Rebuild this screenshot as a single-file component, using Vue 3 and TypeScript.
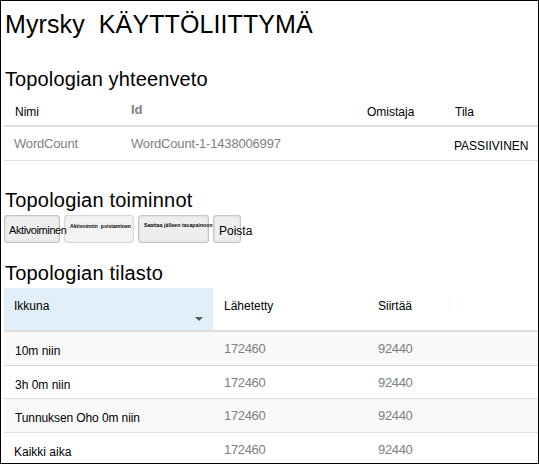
<script setup lang="ts">
interface StatRow {
  window: string
  emitted: string
  transferred: string
  cls: string
}

const stats: StatRow[] = [
  { window: '10m niin', emitted: '172460', transferred: '92440', cls: 'r10m' },
  { window: '3h 0m niin', emitted: '172460', transferred: '92440', cls: 'r3h' },
  { window: 'Tunnuksen Oho 0m niin', emitted: '172460', transferred: '92440', cls: 'r1d' },
  { window: 'Kaikki aika', emitted: '172460', transferred: '92440', cls: 'rall' },
]
</script>

<template>
  <main class="page">
    <h1>Myrsky&nbsp; KÄYTTÖLIITTYMÄ</h1>

    <h2 class="h-summary">Topologian yhteenveto</h2>
    <div class="table summary">
      <div class="row head">
        <span class="name">Nimi</span>
        <span class="id">Id</span>
        <span class="owner">Omistaja</span>
        <span class="status">Tila</span>
      </div>
      <div class="row data">
        <span class="muted">WordCount</span>
        <span class="muted">WordCount-1-1438006997</span>
        <span></span>
        <span class="state">PASSIIVINEN</span>
      </div>
    </div>

    <h2 class="h-actions">Topologian toiminnot</h2>
    <div class="actions">
      <button class="activate" type="button"><span>Aktivoiminen</span></button>
      <button class="deactivate" type="button" disabled><span>Aktivoinnin&nbsp; poistaminen</span></button>
      <button class="rebalance" type="button"><span>Saattaa jälleen tasapainoon</span></button>
      <button class="kill" type="button"><span>Poista</span></button>
    </div>

    <h2 class="h-stats">Topologian tilasto</h2>
    <div class="table stats">
      <div class="row head">
        <span class="sorted">
          <span class="window">Ikkuna</span>
          <svg width="8" height="4" viewBox="0 0 8 4"><path d="M0 0h8L4 4z" fill="#555c60" /></svg>
        </span>
        <span class="emitted">Lähetetty</span>
        <span class="transferred">Siirtää</span>
        <span class="tick"></span>
      </div>
      <div v-for="s in stats" :key="s.window" class="row data" :class="s.cls">
        <span class="label">{{ s.window }}</span>
        <span class="muted">{{ s.emitted }}</span>
        <span class="muted">{{ s.transferred }}</span>
      </div>
    </div>
  </main>
</template>

<style>
body {
  background: #fff;
}
</style>

<style scoped>
.page {
  box-sizing: border-box;
  width: 539px;
  height: 464px;
  overflow: hidden;
  border: 1px solid #000;
  padding-left: 3px;
  background: #fff;
  color: #000;
  font-family: 'Liberation Sans', Arial, sans-serif;
  font-size: 12px;
  white-space: nowrap;
}
h1,
h2 {
  margin: 0;
  font-weight: 400;
}
h1 {
  padding: 9px 0 0 1px;
  height: 57px;
  box-sizing: border-box;
  font-size: 25px;
  line-height: 28px;
  letter-spacing: 0.1px;
}
h2 {
  box-sizing: border-box;
  padding: 9px 0 0 1px;
  font-size: 20px;
  line-height: 24px;
  letter-spacing: 0.12px;
}
.h-summary {
  height: 39px;
}
.h-actions {
  height: 54px;
  padding-top: 27px;
  letter-spacing: 0.2px;
}
.h-stats {
  height: 45px;
  padding-top: 18px;
  letter-spacing: 0.2px;
}
.row {
  display: grid;
  line-height: 14px;
}
.row > span {
  display: block;
}
.muted {
  color: #808080;
  font-size: 13px;
  letter-spacing: -0.18px;
}
.summary .row {
  grid-template-columns: 117px 236px 87px 1fr;
  box-sizing: border-box;
  padding-left: 10px;
}
.summary .head {
  height: 30px;
  border-bottom: 2px solid #ddd;
  padding-top: 5px;
}
.summary .head > span {
  padding-top: 3px;
}
.summary .head > .name {
  padding-left: 1px;
}
.summary .head > .id {
  padding-top: 1px;
  color: #808080;
  font-size: 13px;
  font-weight: 700;
}
.summary .head > .status {
  padding-left: 1px;
}
.summary .data {
  height: 34px;
  border-bottom: 1px solid #ddd;
  padding-top: 10px;
}
.state {
  padding-top: 2px;
}
.actions {
  display: flex;
  gap: 4px;
}
button {
  box-sizing: border-box;
  height: 28px;
  margin: 0;
  padding: 0;
  border: 1px solid #c5c5c5;
  border-radius: 3px;
  background: #eee;
  box-shadow: inset 0 0 2px #c4c4c4;
  color: #000;
  font: 12px/14px 'Liberation Sans', Arial, sans-serif;
  text-align: left;
  display: flex;
  align-items: flex-start;
  overflow: visible;
}
button > span {
  position: relative;
  z-index: 1;
}
.activate {
  width: 56px;
  padding: 7px 0 0 4px;
  font-size: 11px;
  letter-spacing: -0.4px;
}
.deactivate {
  width: 70px;
  padding: 7px 0 0 5px;
  border-color: #d8d8d8;
  background: #f3f3f3;
  box-shadow: inset 0 0 2px #ddd;
  font-size: 5px;
  line-height: 7px;
  font-weight: 700;
  letter-spacing: 0.06px;
}
.rebalance {
  width: 71px;
  padding: 6px 0 0 5px;
  font-size: 5px;
  line-height: 7px;
  font-weight: 700;
  letter-spacing: 0.11px;
}
.kill {
  width: 28px;
  padding: 8px 0 0 5px;
}
.stats .row {
  grid-template-columns: 209px 155px 81px 1fr;
}
.stats .head {
  height: 42px;
  border-bottom: 2px solid #ddd;
}
.stats .head > span {
  padding-top: 11px;
}
.stats .head > .sorted {
  display: flex;
  justify-content: space-between;
  padding: 11px 10px 0 10px;
  background: #e2eff8;
}
.sorted svg {
  margin-top: 18px;
}
.emitted,
.stats .data > .muted {
  padding-left: 11px;
}
.stats .data > .muted {
  letter-spacing: -0.35px;
}
.stats .head > .transferred,
.stats .data > .muted + .muted {
  padding-left: 10px;
}
.stats .head > .tick {
  width: 1px;
  height: 10px;
  margin-top: 10px;
  padding: 0;
  background: #d8ffff;
}
.stats .data {
  box-sizing: border-box;
  height: 34px;
  border-bottom: 1px solid #ddd;
  padding-top: 10px;
}
.stats .data > .label {
  padding: 2px 0 0 11px;
}
.stats .r10m {
  background: #f9f9f9;
}
.stats .r3h {
  height: 33px;
}
.stats .r1d {
  background: #f9f9f9;
}
.stats .r1d > .label {
  letter-spacing: -0.1px;
}
.stats .rall {
  height: 30px;
  border: 0;
}
.stats .rall > .label {
  padding-left: 10px;
}
</style>
